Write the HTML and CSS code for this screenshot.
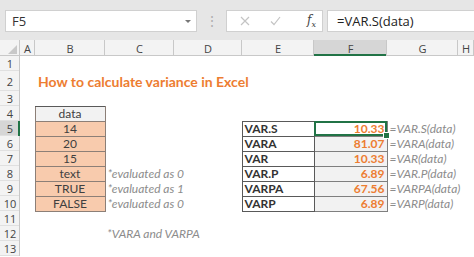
FILE: index.html
```html
<!DOCTYPE html>
<html>
<head>
    <title>How to calculate variance in Excel</title>
    <link rel="stylesheet" href="styles.css">
</head>
<body>
    <div class="topbar">
        <div class="namebox">
            <span>F5</span>
            <span class="arrow"></span>
        </div>
        <div class="dots">&#8942;</div>
        <div class="fxbox">
            <svg width="10" height="10" viewBox="0 0 10 10"><path d="M1 1 L9 9 M9 1 L1 9" stroke="#c4c4c4" stroke-width="1.2" fill="none"/></svg>
            <svg width="11" height="10" viewBox="0 0 11 10"><path d="M1 5.5 L4 8.5 L10 1" stroke="#c4c4c4" stroke-width="1.2" fill="none"/></svg>
            <span class="fx">f<sub>x</sub></span>
        </div>
        <div class="formula">=VAR.S(data)</div>
    </div>

    <table class="sheet">
        <colgroup>
            <col style="width:20px">
            <col style="width:15px">
            <col style="width:70px">
            <col style="width:69px">
            <col style="width:68px">
            <col style="width:72px">
            <col style="width:73px">
            <col style="width:71px">
            <col style="width:16px">
        </colgroup>
        <tr class="colhead">
            <th class="corner"><span class="tri"></span></th>
            <th>A</th><th>B</th><th>C</th><th>D</th><th>E</th><th class="sel">F</th><th>G</th><th>H</th>
        </tr>
        <tr><th>1</th><td></td><td></td><td></td><td></td><td></td><td></td><td></td><td></td></tr>
        <tr class="r2"><th>2</th><td></td><td colspan="7" class="title">How to calculate variance in Excel</td></tr>
        <tr><th>3</th><td></td><td></td><td></td><td></td><td></td><td></td><td></td><td></td></tr>
        <tr><th>4</th><td></td><td class="data head">data</td><td></td><td></td><td></td><td></td><td></td><td></td></tr>
        <tr><th class="selrow">5</th><td></td><td class="data">14</td><td></td><td></td><td class="fn">VAR.S</td><td class="val active">10.33<span class="handle"></span></td><td class="note">=VAR.S(data)</td><td></td></tr>
        <tr><th>6</th><td></td><td class="data">20</td><td></td><td></td><td class="fn">VARA</td><td class="val">81.07</td><td class="note">=VARA(data)</td><td></td></tr>
        <tr><th>7</th><td></td><td class="data">15</td><td></td><td></td><td class="fn">VAR</td><td class="val">10.33</td><td class="note">=VAR(data)</td><td></td></tr>
        <tr><th>8</th><td></td><td class="data">text</td><td class="note">*evaluated as 0</td><td></td><td class="fn">VAR.P</td><td class="val">6.89</td><td class="note">=VAR.P(data)</td><td></td></tr>
        <tr><th>9</th><td></td><td class="data">TRUE</td><td class="note">*evaluated as 1</td><td></td><td class="fn">VARPA</td><td class="val">67.56</td><td class="note">=VARPA(data)</td><td></td></tr>
        <tr><th>10</th><td></td><td class="data">FALSE</td><td class="note">*evaluated as 0</td><td></td><td class="fn">VARP</td><td class="val">6.89</td><td class="note">=VARP(data)</td><td></td></tr>
        <tr><th>11</th><td></td><td></td><td></td><td></td><td></td><td></td><td></td><td></td></tr>
        <tr><th>12</th><td></td><td></td><td class="note" colspan="2">*VARA and VARPA</td><td></td><td></td><td></td><td></td></tr>
        <tr><th>13</th><td></td><td></td><td></td><td></td><td></td><td></td><td></td><td></td></tr>
    </table>
</body>
</html>
```

FILE: styles.css
```css
html, body {
    margin: 0;
    overflow: hidden;
    background: white;
    font-family: Lato, "Open Sans", sans-serif;
}
.topbar {
    height: 40px;
    background: #e6e6e6;
    display: flex;
    align-items: flex-start;
    padding-top: 10px;
    box-sizing: border-box;
}
.namebox {
    margin-left: 5px;
    width: 192px;
    height: 22px;
    background: white;
    border: 1px solid #d0d0d0;
    box-sizing: border-box;
    display: flex;
    align-items: center;
    justify-content: space-between;
    padding: 0 5px 0 6px;
    font-family: "Open Sans", sans-serif;
    font-size: 13px;
    color: #333;
}
.arrow {
    width: 0;
    height: 0;
    border-left: 3px solid transparent;
    border-right: 3px solid transparent;
    border-top: 3px solid #777;
}
.dots {
    width: 29px;
    text-align: center;
    color: #b0b0b0;
    font-size: 14px;
    line-height: 22px;
}
.fxbox {
    width: 97px;
    height: 22px;
    background: white;
    border: 1px solid #d0d0d0;
    box-sizing: border-box;
    display: flex;
    align-items: center;
    gap: 20px;
    padding-left: 13px;
}
.fx {
    font-family: "DejaVu Serif", serif;
    font-style: italic;
    font-size: 12px;
    color: #444;
    margin-left: 6px;
}
.fx sub {
    font-size: 8px;
}
.formula {
    flex: 1;
    margin-left: 4px;
    height: 22px;
    background: white;
    border: 1px solid #d0d0d0;
    border-right: none;
    box-sizing: border-box;
    padding-left: 9px;
    font-family: "Open Sans", sans-serif;
    font-size: 13px;
    line-height: 20px;
    color: #222;
}
.sheet {
    border-collapse: collapse;
    table-layout: fixed;
    width: 474px;
    font-size: 12px;
    color: #404040;
}
.sheet tr {
    height: 15px;
}
.sheet td, .sheet th {
    padding: 0;
    line-height: 13px;
    white-space: nowrap;
    overflow: visible;
}
/* header lines drawn as shadows so they don't change row heights */
.sheet th {
    font-weight: normal;
    font-family: "Open Sans", sans-serif;
    font-size: 11px;
    color: #444;
    background: #f3f3f3;
    box-shadow: inset -1px 0 #c8c8c8, inset 0 -1px #e0e0e0;
}
.sheet tr.colhead {
    height: 16px;
}
.colhead th {
    box-shadow: inset -1px 0 #c8c8c8, inset 0 -1px #c8c8c8;
}
.colhead th.sel {
    background: #d6d6d6;
    box-shadow: inset -1px 0 #c8c8c8, inset 0 -2px #217346;
}
.corner {
    position: relative;
}
.tri {
    position: absolute;
    right: 3px;
    bottom: 2px;
    width: 0;
    height: 0;
    border-left: 9px solid transparent;
    border-bottom: 9px solid #c8c8c8;
}
.sheet tr th:first-child {
    text-align: center;
}
.sheet tr th.selrow {
    background: #d6d6d6;
    box-shadow: inset -2px 0 #217346, inset 0 -1px #e0e0e0;
}
.sheet tr.r2 {
    height: 20px;
}
.title {
    color: #ed7d31;
    font-weight: bold;
    font-size: 14px;
    padding-left: 3px !important;
}
.data {
    background: #f8cbad;
    border: 1px solid #8c7f77;
    text-align: center;
}
.data.head {
    background: #f2f2f2;
    border-top: 1px solid #595959;
}
.note {
    color: #8c8c8c;
    font-style: italic;
    padding-left: 2px !important;
}
.fn {
    border: 1px solid #595959;
    font-weight: bold;
    color: #333;
    padding-left: 2px !important;
}
.val {
    border: 1px solid #7f7f7f;
    background: #f2f2f2;
    color: #ed7d31;
    font-weight: bold;
    text-align: right;
    padding-right: 2px !important;
}
.active {
    position: relative;
    outline: 2px solid #217346;
    outline-offset: -2px;
    background: white;
}
.handle {
    position: absolute;
    right: -3px;
    bottom: -3px;
    width: 5px;
    height: 5px;
    background: #217346;
    border: 1px solid white;
}
```
